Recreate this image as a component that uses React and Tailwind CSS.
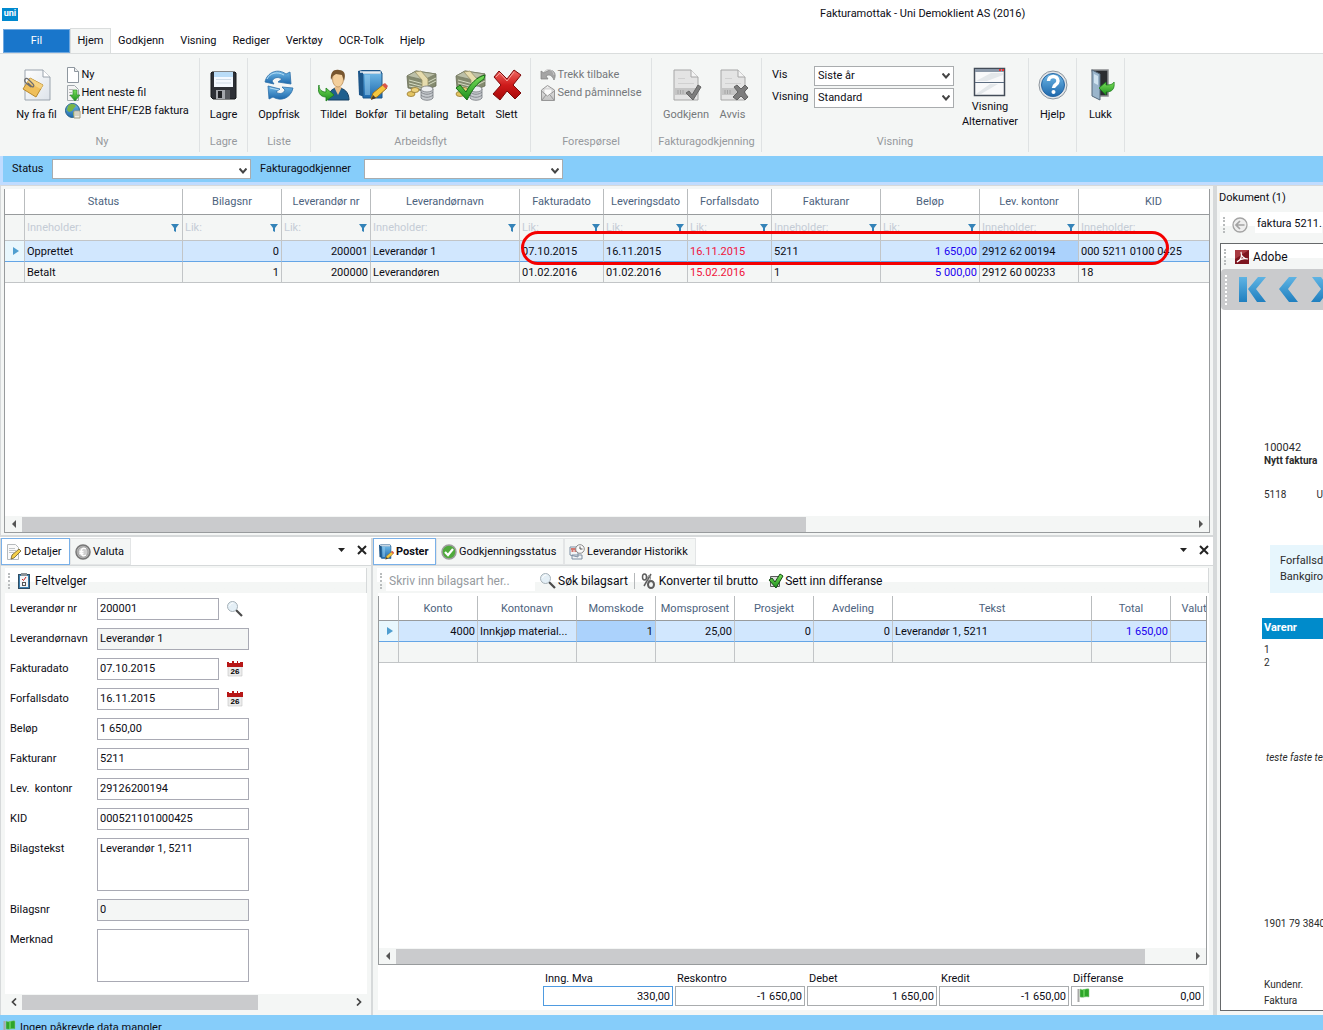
import React from "react";

// Gradients shared by the toolbar icons
const IconDefs = () => (
  <svg width="0" height="0" className="absolute" aria-hidden="true">
    <defs>
      <linearGradient id="blue" x1="0" y1="0" x2="0" y2="1">
        <stop offset="0" stopColor="#6fb8e6" />
        <stop offset="1" stopColor="#1d68ac" />
      </linearGradient>
      <linearGradient id="navArrow" x1="0" y1="0" x2="0" y2="1">
        <stop offset="0" stopColor="#5fb4e4" />
        <stop offset="1" stopColor="#1f7fbf" />
      </linearGradient>
      <linearGradient id="red" x1="0" y1="0" x2="0" y2="1">
        <stop offset="0" stopColor="#f06a64" />
        <stop offset="0.5" stopColor="#cf1b1b" />
        <stop offset="1" stopColor="#a50808" />
      </linearGradient>
      <linearGradient id="green" x1="0" y1="0" x2="0" y2="1">
        <stop offset="0" stopColor="#7be05a" />
        <stop offset="1" stopColor="#1d8f1d" />
      </linearGradient>
      <linearGradient id="paper" x1="0" y1="0" x2="1" y2="1">
        <stop offset="0" stopColor="#ffffff" />
        <stop offset="1" stopColor="#dde3ea" />
      </linearGradient>
      <linearGradient id="grey" x1="0" y1="0" x2="0" y2="1">
        <stop offset="0" stopColor="#f0f0f0" />
        <stop offset="1" stopColor="#c2c2c2" />
      </linearGradient>
    </defs>
  </svg>
);

const NoteIcon = () => (
  <svg width="32" height="34" viewBox="0 0 32 34">
    <path d="M4 2h18l7 7v23H4z" fill="url(#paper)" stroke="#9aa3ad" />
    <path d="M22 2v7h7" fill="#fff" stroke="#9aa3ad" />
    <path d="M9 10l13 7-7 12L2 21z" fill="#efbf5b" stroke="#b98a2c" />
    <path d="M9 10l13 7-2 4L6 14z" fill="#f9dc93" opacity=".7" />
    <path d="M10 19L5 15c-3-3 0-6 2-4l5 5c2 2 0 4-2 2l-3-3" fill="none" stroke="#6d6d6d" strokeWidth="1.2" />
  </svg>
);

const SaveIcon = () => (
  <svg width="32" height="34" viewBox="0 0 32 34">
    <path d="M4 4h23l1 1v25l-1 1H5l-2-2V5z" fill="#2d3036" stroke="#17181b" />
    <rect x="6" y="4" width="19" height="15" fill="#f4f9ff" />
    <path d="M6 4h19v5H6z" fill="#b9dcf7" />
    <path d="M8 11.500h15M8 15h15" stroke="#cfdbe6" />
    <rect x="8" y="22" width="14" height="9" fill="#a4a7ac" />
    <rect x="10" y="23" width="4" height="7" fill="#202226" />
    <path d="M17 22h5v9h-5z" fill="#55585d" />
  </svg>
);

const RefreshIcon = () => (
  <svg width="32" height="34" viewBox="0 0 32 34">
    <path d="M2 14C4 4 15 0 23 6l4-2 1 12-13-2 4-3c-5-3-8-1-10 2l2 3z" fill="url(#blue)" stroke="#2c6fa8" strokeWidth=".8" />
    <path d="M30 20c-2 10-12 14-20 9l-4 2-1-13 12 3-4 3c4 3 8 1 9-2l-3-3z" fill="url(#blue)" stroke="#2c6fa8" strokeWidth=".8" />
    <path d="M4 11c3-6 10-8 17-4" fill="none" stroke="#b5dcf4" />
    <path d="M7 20l9 2" fill="none" stroke="#b5dcf4" />
  </svg>
);

const UserIcon = () => (
  <svg width="32" height="34" viewBox="0 0 32 34">
    <path d="M10 32c0-8 4-12 10-12s11 4 11 12z" fill="#1f5f8e" stroke="#153f62" />
    <path d="M16 19l4 8 4-8z" fill="#e9c08d" />
    <ellipse cx="20" cy="11" rx="5.500" ry="8" fill="#f3cf9c" stroke="#b98d58" strokeWidth=".8" />
    <path d="M13 12c-1-8 3-11 8-10 6 0 7 5 5 11l-2-6-6-1-3 2z" fill="#77562f" />
    <path d="M1 17c0 5 3 7 7 7v-4l8 7-8 6v-4c-6 0-9-5-7-12z" fill="url(#green)" stroke="#1c7d1c" strokeWidth=".8" />
  </svg>
);

const BookIcon = ({ size = 32 }) => (
  <svg width={size} height={size} viewBox="0 0 32 32">
    <path d="M2 2l4-1h18l2 2v25H8l-5-2z" fill="#1d5689" />
    <path d="M7 4h19v25H7z" fill="url(#blue)" stroke="#1d5689" />
    <path d="M4 3h20v1H7" fill="none" stroke="#e5edf4" strokeWidth="1.5" />
    <path d="M9 6h5v20H9z" fill="#9bd0ef" opacity=".5" />
    <path d="M15 30l2-6 11-9 3 4-10 9z" fill="#f5c73d" stroke="#9a7220" />
    <path d="M26 16l3-2 3 3-2 3z" fill="#d9574b" />
    <path d="M15 31l2-5 3 3z" fill="#4a3b28" />
  </svg>
);

const MoneyIcon = ({ checked }) => (
  <svg width="32" height="34" viewBox="0 0 32 34">
    <path d="M1 8l9-5 20 3v12l-12 5L2 20z" fill="#858b70" stroke="#666b53" strokeWidth=".8" />
    <path d="M1 8l9-5 20 3-12 6z" fill="#bcc0a8" stroke="#7b8068" strokeWidth=".8" />
    <path d="M3 12l15 4 12-6M3 15l15 4 12-6M3 18l15 3" stroke="#d6dcc3" fill="none" />
    <path d="M9 4l6-1 7 8v10h-6V12z" fill="#e6dcae" stroke="#9b9266" strokeWidth=".8" />
    <ellipse cx="5" cy="26" rx="4" ry="2.500" fill="#e3c463" stroke="#987a2c" strokeWidth=".8" />
    <ellipse cx="9" cy="22" rx="4" ry="2.500" fill="#edd27e" stroke="#987a2c" strokeWidth=".8" />
    <path d="M15 21v9c2 3 10 3 12 0v-9" fill="#c6cace" stroke="#75797e" strokeWidth=".8" />
    <ellipse cx="21" cy="21" rx="6" ry="3" fill="#eceef0" stroke="#75797e" strokeWidth=".8" />
    <path d="M15 24c3 3 9 3 12 0M15 27c3 3 9 3 12 0" fill="none" stroke="#75797e" strokeWidth=".8" />
    {checked && (
      <path d="M1 20l4-3 6 7C15 16 22 9 30 7l-1 4C22 15 17 22 12 32z" fill="url(#green)" stroke="#186e18" />
    )}
  </svg>
);

const CrossIcon = () => (
  <svg width="32" height="34" viewBox="0 0 32 34">
    <path d="M3 9l5-6 8 8 7-9 7 5-8 10 8 8-6 6-8-8-7 9-7-6 8-9z" fill="url(#red)" stroke="#7c0909" />
    <path d="M5 9l4-4 7 8 7-9" fill="none" stroke="#f7a19c" />
  </svg>
);

const DocIcon = ({ mark }) => (
  <svg width="32" height="34" viewBox="0 0 32 34">
    <path d="M4 2h17l7 7v23H4z" fill="#e4e4e4" stroke="#a6a6a6" />
    <path d="M21 2v7h7" fill="#f4f4f4" stroke="#a6a6a6" />
    <path d="M8 10.500h7M8 15.500h16" stroke="#d0d0d0" />
    <path d="M4 20h24v7H4z" fill="#c5c5c5" />
    <path d="M8 22v4M10.500 22v4M13 22v4" stroke="#a5a5a5" />
    {mark === "check" ? (
      <path d="M16 25l3-2 3 4 6-10 3 2-8 13z" fill="#7d7d7d" stroke="#636363" />
    ) : (
      <path d="M17 19l3-2 4 4 4-4 3 3-4 4 4 5-3 3-4-4-4 4-4-3 5-5z" fill="#7d7d7d" stroke="#636363" />
    )}
  </svg>
);

const WindowIcon = () => (
  <svg width="34" height="30" viewBox="0 0 34 30">
    <rect x="1.500" y="1.500" width="30" height="27" fill="#f8f9fa" stroke="#434c58" strokeWidth="1.500" />
    <path d="M2 2h29v3H2z" fill="#8b98a8" />
    <path d="M26 3h2M29 3h2" stroke="#e33" strokeWidth="2" />
    <path d="M2 15.500h29" stroke="#5b6c80" />
    <path d="M3 14L18 6h12v2L14 14zM3 27l14-10h8L8 27z" fill="#e3e7ea" />
  </svg>
);

const HelpIcon = () => (
  <svg width="32" height="34" viewBox="0 0 32 34">
    <circle cx="16" cy="17" r="14" fill="#e2e5e8" stroke="#8d969e" />
    <circle cx="16" cy="17" r="11.500" fill="url(#blue)" stroke="#2766a3" />
    <path d="M11.500 13c0-6 9.500-6 9.500 0 0 4-4.500 3.500-4.500 7" fill="none" stroke="#fff" strokeWidth="3.500" />
    <circle cx="16.500" cy="24" r="2" fill="#fff" />
  </svg>
);

const ExitIcon = () => (
  <svg width="32" height="34" viewBox="0 0 32 34">
    <path d="M7 2h16v26h-9z" fill="#2b2d30" stroke="#8b8d90" strokeWidth="1.500" />
    <path d="M7 2l8 4v26l-8-4z" fill="#9ab5cb" stroke="#54687a" />
    <path d="M9 6l4 2v9l-4-2z" fill="#cfe2ef" />
    <path d="M14 20l7-6v3c5 0 7-1 8-3 1 7-2 10-8 10v3z" fill="url(#green)" stroke="#1c7d1c" strokeWidth=".8" />
  </svg>
);

const PageIcon = () => (
  <svg width="16" height="16" viewBox="0 0 16 16">
    <path d="M2.500.500h7l4 4v11h-11z" fill="#fff" stroke="#8e979f" />
    <path d="M9.500.500v4h4" fill="#eee" stroke="#8e979f" />
  </svg>
);

const PageDownIcon = () => (
  <svg width="16" height="16" viewBox="0 0 16 16">
    <path d="M2.500.500h7l4 4v11h-11z" fill="#f4f4f4" stroke="#a1a8ad" />
    <path d="M4 4.500h4M4 7.500h3M4 10.500h3" stroke="#b8b8b8" />
    <path d="M8 5h4v5h3l-5 6-5-6h3z" fill="url(#green)" stroke="#2e8b2e" strokeWidth=".7" />
  </svg>
);

const GlobeIcon = () => (
  <svg width="16" height="16" viewBox="0 0 16 16">
    <circle cx="7.500" cy="7.500" r="7" fill="url(#blue)" stroke="#255f85" />
    <path d="M3 3c3-3 7-2 8 0L9 5 7 8 4 9 2 7zM8 9l4 1-2 4-2-2z" fill="#79b544" />
    <path d="M9 8h6v7H9z" fill="#f1efe4" stroke="#a39d83" />
    <path d="M10 10h4M10 12h4" stroke="#a39d83" strokeWidth=".7" />
  </svg>
);

const UndoIcon = () => (
  <svg width="16" height="14" viewBox="0 0 16 14">
    <path d="M1 3v8h7L6 8c3-2 6-1 8 4 4-8-3-13-10-7z" fill="#a5a5a5" stroke="#7e7e7e" strokeWidth=".7" />
    <path d="M4 4c3-4 9-3 10 3" fill="none" stroke="#c9c9c9" />
  </svg>
);

const MailIcon = () => (
  <svg width="16" height="16" viewBox="0 0 16 16">
    <path d="M1.500 5l6-4.500 7 4.500v10.500h-13z" fill="url(#grey)" stroke="#979797" />
    <path d="M4 4h8v5l-4 3-4-3z" fill="#fafafa" stroke="#c0c0c0" strokeWidth=".7" />
    <path d="M1.500 6l6 5 7-5M2 15l4-5M14 15l-4-5" fill="none" stroke="#979797" />
  </svg>
);

const FunnelIcon = () => (
  <svg width="8" height="8" viewBox="0 0 8 8" className="shrink-0">
    <path d="M0 0h8L5 4v4L3 7V4z" fill="#3483b8" />
  </svg>
);

const PencilPageIcon = () => (
  <svg width="16" height="16" viewBox="0 0 16 16">
    <path d="M1.500.500h8l3 3v12h-11z" fill="#fafafa" stroke="#b6babd" />
    <path d="M3 4.500h6M3 6.500h7M3 8.500h5" stroke="#c1c5c8" />
    <path d="M5 15l1-4 7-6 2 2-7 7z" fill="#f3cf4b" stroke="#6b5a2b" strokeWidth=".8" />
  </svg>
);

const CoinIcon = () => (
  <svg width="16" height="16" viewBox="0 0 16 16">
    <circle cx="8" cy="8" r="7" fill="#b9b9b9" stroke="#777" strokeWidth="1.500" />
    <circle cx="8" cy="8" r="5" fill="#cfcfcf" stroke="#8b8b8b" strokeWidth=".7" />
    <path d="M11 5c-3-2-5 0-5 3s2 5 5 3M4.500 7.500h4M4.500 9.500h4" fill="none" stroke="#fff" strokeWidth="1.300" />
  </svg>
);

const ClipboardIcon = () => (
  <svg width="12" height="16" viewBox="0 0 12 16">
    <rect x=".5" y="1.500" width="11" height="14" fill="#3d7fae" stroke="#2f4c62" />
    <rect x="2" y="3" width="8" height="11" fill="#f2f5f7" />
    <rect x="3" y="0" width="6" height="3" fill="#8b9298" />
    <path d="M4 6l1.500 1.500L8 4" fill="none" stroke="#c22" />
    <rect x="4.500" y="9.500" width="3" height="3" fill="none" stroke="#555" />
  </svg>
);

const SearchIcon = () => (
  <svg width="16" height="16" viewBox="0 0 16 16">
    <path d="M9 9l6 6" stroke="#4b4b4b" strokeWidth="2.200" />
    <circle cx="5.500" cy="5.500" r="5" fill="#e4eff6" stroke="#a6b1b8" />
    <path d="M2.500 5c1-2 2-3 4-3" stroke="#fff" fill="none" />
  </svg>
);

const CalendarIcon = () => (
  <svg width="16" height="16" viewBox="0 0 16 16">
    <path d="M1 4h14v11H1z" fill="#ececec" stroke="#c4c4c4" strokeWidth=".6" />
    <path d="M0 1h2v1h3V0h2v2h3V0h1v2h2V1h3v5H0z" fill="#b71717" />
    <text x="8" y="13" textAnchor="middle" className="fill-black font-['Liberation_Sans',sans-serif] text-[8px] font-bold">
      26
    </text>
  </svg>
);

const CheckCircleIcon = () => (
  <svg width="16" height="16" viewBox="0 0 16 16">
    <circle cx="8" cy="8" r="7" fill="#4faa3b" stroke="#9c9c9c" strokeWidth="1.500" />
    <path d="M4 8l3 3 5-6" fill="none" stroke="#fff" strokeWidth="2.200" />
  </svg>
);

const HistoryIcon = () => (
  <svg width="16" height="16" viewBox="0 0 16 16">
    <path d="M1 3h8v10l-8-2zM3 11h10v4H3z" fill="#f2f4f6" stroke="#7d8fa3" />
    <path d="M2 5h6M2.500 7h2M5.500 7h2" stroke="#cc4c40" strokeWidth="1.500" />
    <circle cx="11" cy="5" r="4.300" fill="#fafafa" stroke="#8a8a8a" />
    <path d="M11 2.500V5h2.500" fill="none" stroke="#555" />
  </svg>
);

const PercentIcon = () => (
  <svg width="16" height="16" viewBox="0 0 16 16" fill="none" stroke="#5e5e5e">
    <path d="M10 1L3 13" strokeWidth="1.500" />
    <ellipse cx="3.500" cy="4" rx="2" ry="3" strokeWidth="1.500" />
    <ellipse cx="8" cy="5" rx="1.500" ry="2.500" strokeWidth="1" stroke="#8e8e8e" />
    <ellipse cx="10" cy="11.500" rx="3" ry="3.500" strokeWidth="2" />
  </svg>
);

const CheckBoxIcon = () => (
  <svg width="16" height="16" viewBox="0 0 16 16">
    <path d="M2.500 3.500h9v10h-9z" fill="#ddd" stroke="#5b5b5b" />
    <path d="M1 7l3-2 3 4 5-8 3 2-7 12z" fill="url(#green)" stroke="#154d15" />
  </svg>
);

const FlagIcon = () => (
  <svg width="13" height="15" viewBox="0 0 13 15">
    <path d="M1.500 1v13" stroke="#a9a9a9" strokeWidth="2" />
    <path d="M3 1c4 2 5-1 9 0v8c-4-1-5 1-9 0z" fill="#2ea52a" stroke="#8cc98a" strokeWidth=".5" />
    <path d="M7 1v8" stroke="#6ad45e" strokeWidth="1.500" />
  </svg>
);

const BackIcon = () => (
  <svg width="16" height="16" viewBox="0 0 16 16" fill="none" stroke="#a3a3a3">
    <circle cx="8" cy="8" r="7" fill="#eee" strokeWidth="1.300" />
    <path d="M12.500 8H4M8 4L4 8l4 4" strokeWidth="1.700" />
  </svg>
);

const AdobeIcon = () => (
  <svg width="14" height="14" viewBox="0 0 14 14">
    <rect width="14" height="14" fill="#7e1620" />
    <path d="M0 0h14L0 9z" fill="#a83b42" />
    <path d="M2 12c4-2 5-6 4-10 0 4 3 7 7 7-4-1-8 0-11 3z" fill="none" stroke="#fff" strokeWidth="1.100" />
  </svg>
);

const Chevron = () => (
  <svg width="8" height="6" viewBox="0 0 8 6" className="pointer-events-none absolute top-1/2 right-1 -translate-y-1/2">
    <path d="M.5.500L4 4.500 7.500.500" fill="none" stroke="#444" strokeWidth="2" />
  </svg>
);

const Grip = () => (
  <span className="h-4 w-[2px] shrink-0 border-l-2 border-dotted border-[#b9bcbd]"></span>
);

const menuTabs = ["Godkjenn", "Visning", "Rediger", "Verktøy", "OCR-Tolk", "Hjelp"];

const workflow = [
  { label: "Tildel", icon: <UserIcon />, width: "w-[38px]" },
  { label: "Bokfør", icon: <BookIcon />, width: "w-[38px]" },
  { label: "Til betaling", icon: <MoneyIcon />, width: "w-[62px]" },
  { label: "Betalt", icon: <MoneyIcon checked />, width: "w-[36px]" },
  { label: "Slett", icon: <CrossIcon />, width: "w-[36px]" },
];

const invoiceColumns = [
  { title: "Status", width: "w-[158px]", filter: "Inneholder:" },
  { title: "Bilagsnr", width: "w-[99px]", filter: "Lik:" },
  { title: "Leverandør nr", width: "w-[89px]", filter: "Lik:" },
  { title: "Leverandørnavn", width: "w-[149px]", filter: "Inneholder:" },
  { title: "Fakturadato", width: "w-[84px]", filter: "Lik:" },
  { title: "Leveringsdato", width: "w-[84px]", filter: "Lik:" },
  { title: "Forfallsdato", width: "w-[84px]", filter: "Lik:" },
  { title: "Fakturanr", width: "w-[109px]", filter: "Inneholder:" },
  { title: "Beløp", width: "w-[99px]", filter: "Lik:" },
  { title: "Lev. kontonr", width: "w-[99px]", filter: "Inneholder:" },
  { title: "KID", width: "w-[150px]", filter: "Inneholder:" },
];

const invoices = [
  ["Opprettet", "0", "200001", "Leverandør 1", "07.10.2015", "16.11.2015", "16.11.2015", "5211", "1 650,00", "2912 62 00194", "000 5211 0100 0425"],
  ["Betalt", "1", "200000", "Leverandøren", "01.02.2016", "01.02.2016", "15.02.2016", "1", "5 000,00", "2912 60 00233", "18"],
];

const postColumns = [
  { title: "Konto", width: "w-[79px]" },
  { title: "Kontonavn", width: "w-[99px]" },
  { title: "Momskode", width: "w-[79px]" },
  { title: "Momsprosent", width: "w-[79px]" },
  { title: "Prosjekt", width: "w-[79px]" },
  { title: "Avdeling", width: "w-[79px]" },
  { title: "Tekst", width: "w-[199px]" },
  { title: "Total", width: "w-[79px]" },
  { title: "Valut", width: "w-[47px]" },
];

const postRow = ["4000", "Innkjøp material...", "1", "25,00", "0", "0", "Leverandør 1, 5211", "1 650,00", ""];

const fields = [
  { id: "levnr", label: "Leverandør nr", value: "200001", icon: "search" },
  { id: "levnavn", label: "Leverandørnavn", value: "Leverandør 1", readOnly: true },
  { id: "fakturadato", label: "Fakturadato", value: "07.10.2015", icon: "calendar" },
  { id: "forfallsdato", label: "Forfallsdato", value: "16.11.2015", icon: "calendar" },
  { id: "belop", label: "Beløp", value: "1 650,00" },
  { id: "fakturanr", label: "Fakturanr", value: "5211" },
  { id: "kontonr", label: "Lev.  kontonr", value: "29126200194" },
  { id: "kid", label: "KID", value: "000521101000425" },
  { id: "bilagstekst", label: "Bilagstekst", value: "Leverandør 1, 5211", area: true },
  { id: "bilagsnr", label: "Bilagsnr", value: "0", readOnly: true },
  { id: "merknad", label: "Merknad", value: "", area: true },
];

const totals = [
  { id: "mva", label: "Inng. Mva", value: "330,00", active: true },
  { id: "reskontro", label: "Reskontro", value: "-1 650,00" },
  { id: "debet", label: "Debet", value: "1 650,00" },
  { id: "kredit", label: "Kredit", value: "-1 650,00" },
  { id: "differanse", label: "Differanse", value: "0,00", flag: true },
];

const RibbonGroup = ({ label, className = "", children }) => (
  <section className={`my-1 flex h-[94px] shrink-0 flex-col border-r border-[#dfe2e3] ${className}`}>
    <div className="flex h-[76px] justify-center">{children}</div>
    <div className="text-center leading-4 text-[#96999d]">{label}</div>
  </section>
);

const BigButton = ({ icon, label, className = "", disabled }) => (
  <button
    disabled={disabled}
    className={`flex shrink-0 flex-col items-center gap-1 pt-[9px] whitespace-nowrap ${disabled ? "text-[#75787b]" : ""} ${className}`}
  >
    <span className="flex h-[36px] items-center">{icon}</span>
    <span className="leading-4">{label}</span>
  </button>
);

const SmallButton = ({ icon, label, disabled }) => (
  <button
    disabled={disabled}
    className={`flex h-[18px] items-center gap-px whitespace-nowrap ${disabled ? "text-[#75787b]" : ""}`}
  >
    <span className="flex w-4 justify-center">{icon}</span>
    {label}
  </button>
);

const Dropdown = ({ id, value, className = "" }) => (
  <div className={`relative ${className}`}>
    <select
      id={id}
      defaultValue={value}
      className="block h-5 w-full appearance-none border border-[#a9acae] bg-white pl-[3px] outline-none"
    >
      <option>{value}</option>
    </select>
    <Chevron />
  </div>
);

const ScrollBar = ({ thumb, plain }) => (
  <div className="flex h-4 shrink-0 items-center bg-[#f4f6f5]">
    <button aria-label="Rull til venstre" className="flex h-4 w-[17px] shrink-0 items-center justify-center">
      <svg width="6" height="8" viewBox="0 0 6 8">
        {plain ? (
          <path d="M5 0.500L1.500 4 5 7.500" fill="none" stroke="#444" strokeWidth="1.700" />
        ) : (
          <path d="M5 0v8L1 4z" fill="#555" />
        )}
      </svg>
    </button>
    <div className="h-[15px] flex-1">
      <div className={`h-[15px] bg-[#cacbcd] ${thumb}`}></div>
    </div>
    <button aria-label="Rull til høyre" className="flex h-4 w-[17px] shrink-0 items-center justify-center">
      <svg width="6" height="8" viewBox="0 0 6 8">
        {plain ? (
          <path d="M1 0.500L4.500 4 1 7.500" fill="none" stroke="#444" strokeWidth="1.700" />
        ) : (
          <path d="M1 0v8l4-4z" fill="#555" />
        )}
      </svg>
    </button>
  </div>
);

const PanelTab = ({ icon, label, active, bold, className = "" }) => (
  <button
    className={`flex h-[27px] items-center gap-[2px] border pl-1 whitespace-nowrap ${
      active ? "border-[#79b0e8] bg-white" : "border-[#e3e5e6] bg-[#f4f6f5]"
    } ${bold ? "font-bold" : ""} ${className}`}
  >
    {icon}
    <span className="pt-[2px]">{label}</span>
  </button>
);

const PanelControls = () => (
  <div className="ml-auto flex h-6 items-center gap-3 pr-1">
    <button aria-label="Meny">
      <svg width="7" height="4" viewBox="0 0 7 4" className="block">
        <path d="M0 0h7L3.500 4z" fill="#222" />
      </svg>
    </button>
    <button aria-label="Lukk panel">
      <svg width="10" height="10" viewBox="0 0 10 10" className="block">
        <path d="M1 1l8 8M9 1L1 9" stroke="#222" strokeWidth="2" />
      </svg>
    </button>
  </div>
);

const HeadCell = ({ title }) => (
  <th className="border-r border-b border-r-[#b9bcbe] border-b-[#989b9d] bg-white pt-[2px] font-normal text-[#4c627d]">{title}</th>
);

const Marker = ({ active }) => (
  <td className={`border-r border-b ${active ? "border-r-[#c2c5c7] border-b-[#64a5e6] bg-[#e8f7fd]" : "border-[#c2c5c7] bg-[#f4f6f5]"}`}>
    {active && (
      <svg width="6" height="8" viewBox="0 0 6 8" className="ml-2">
        <path d="M0 0v8l6-4z" fill="#4f9fd0" />
      </svg>
    )}
  </td>
);

const InvoiceTable = () => (
  <table className="w-[1224px] table-fixed border-separate border-spacing-0">
    <colgroup>
      <col className="w-5" />
      {invoiceColumns.map((col) => (
        <col key={col.title} className={col.width} />
      ))}
    </colgroup>
    <thead>
      <tr className="h-[26px]">
        <HeadCell />
        {invoiceColumns.map((col) => (
          <HeadCell key={col.title} title={col.title} />
        ))}
      </tr>
    </thead>
    <tbody>
      <tr className="h-[26px]">
        <Marker />
        {invoiceColumns.map((col) => (
          <td key={col.title} className="border-r border-b border-[#c2c5c7] bg-[#f4f6f5] pr-[3px] pl-[2px]">
            <div className="flex items-center">
              <input
                aria-label={`Filter ${col.title}`}
                placeholder={col.filter}
                className="w-full min-w-0 bg-transparent pt-[2px] outline-none placeholder:text-[#c5ccd5]"
              />
              <FunnelIcon />
            </div>
          </td>
        ))}
      </tr>
      {invoices.map((row, r) => (
        <tr key={r} className="h-[21px]">
          <Marker active={r === 0} />
          {row.map((cell, c) => (
            <td
              key={c}
              className={`border-r border-b border-r-[#c2c5c7] px-[2px] pt-[2px] whitespace-nowrap ${
                r === 0 ? "border-b-[#64a5e6]" : "border-b-[#c2c5c7]"
              } ${r === 0 ? (c === 9 ? "bg-[#abd2fc]" : "bg-[#d1e7fe]") : "bg-[#f4f6f5]"} ${
                [1, 2, 8].includes(c) ? "text-right" : ""
              } ${c === 6 ? "text-[#f0143c]" : c === 8 ? "text-[#1a00f0]" : ""}`}
            >
              {cell}
            </td>
          ))}
        </tr>
      ))}
    </tbody>
  </table>
);

const PostTable = () => (
  <table className="w-[838px] table-fixed border-separate border-spacing-0">
    <colgroup>
      <col className="w-5" />
      {postColumns.map((col) => (
        <col key={col.title} className={col.width} />
      ))}
    </colgroup>
    <thead>
      <tr className="h-[25px]">
        <HeadCell />
        {postColumns.map((col) => (
          <HeadCell key={col.title} title={col.title} />
        ))}
      </tr>
    </thead>
    <tbody>
      <tr className="h-[21px]">
        <Marker active />
        {postRow.map((cell, c) => (
          <td
            key={c}
            className={`border-r border-b border-r-[#c2c5c7] border-b-[#64a5e6] px-[2px] pt-[2px] whitespace-nowrap ${
              c === 2 ? "bg-[#abd2fc]" : "bg-[#d1e7fe]"
            } ${c === 1 || c === 6 ? "" : "text-right"} ${c === 7 ? "text-[#1a00f0]" : ""}`}
          >
            {cell}
          </td>
        ))}
      </tr>
      <tr className="h-[21px]">
        <Marker />
        {postRow.map((_, c) => (
          <td key={c} className="border-r border-b border-[#c2c5c7] bg-[#f4f6f5]"></td>
        ))}
      </tr>
    </tbody>
  </table>
);

const Ribbon = () => (
  <div className="flex h-[103px] shrink-0 overflow-hidden border-t border-[#dadddd] bg-[#f4f6f5]">
    <RibbonGroup label="Ny" className="w-[200px] pl-[5px]">
      <BigButton icon={<NoteIcon />} label="Ny fra fil" className="w-[58px] pl-[2px]" />
      <div className="w-[133px] pt-2">
        <SmallButton icon={<PageIcon />} label="Ny" />
        <SmallButton icon={<PageDownIcon />} label="Hent neste fil" />
        <SmallButton icon={<GlobeIcon />} label="Hent EHF/E2B faktura" />
      </div>
    </RibbonGroup>
    <RibbonGroup label="Lagre" className="w-[48px]">
      <BigButton icon={<SaveIcon />} label="Lagre" />
    </RibbonGroup>
    <RibbonGroup label="Liste" className="w-[63px]">
      <BigButton icon={<RefreshIcon />} label="Oppfrisk" />
    </RibbonGroup>
    <RibbonGroup label="Arbeidsflyt" className="w-[220px]">
      <div className="flex pr-[2px]">
        {workflow.map((item) => (
          <BigButton key={item.label} icon={item.icon} label={item.label} className={item.width} />
        ))}
      </div>
    </RibbonGroup>
    <RibbonGroup label="Forespørsel" className="w-[121px]">
      <div className="pt-2">
        <SmallButton icon={<UndoIcon />} label="Trekk tilbake" disabled />
        <SmallButton icon={<MailIcon />} label="Send påminnelse" disabled />
      </div>
    </RibbonGroup>
    <RibbonGroup label="Fakturagodkjenning" className="w-[110px]">
      <BigButton icon={<DocIcon mark="check" />} label="Godkjenn" className="w-[52px]" disabled />
      <BigButton icon={<DocIcon mark="cross" />} label="Avvis" className="w-[41px]" disabled />
    </RibbonGroup>
    <RibbonGroup label="Visning" className="w-[267px]">
      <div className="flex flex-col gap-[2px] pt-2 pl-2">
        <div className="flex">
          <label htmlFor="vis" className="w-[42px] leading-[18px]">Vis</label>
          <Dropdown id="vis" value="Siste år" className="w-[140px]" />
        </div>
        <div className="flex">
          <label htmlFor="visning" className="w-[42px] leading-[18px]">Visning</label>
          <Dropdown id="visning" value="Standard" className="w-[140px]" />
        </div>
      </div>
      <button className="flex w-[72px] flex-col items-center pt-[9px] leading-[15px]">
        <span className="pb-[2px]">
          <WindowIcon />
        </span>
        <span>Visning</span>
        <span>Alternativer</span>
      </button>
    </RibbonGroup>
    <RibbonGroup className="w-[48px]">
      <BigButton icon={<HelpIcon />} label="Hjelp" />
    </RibbonGroup>
    <RibbonGroup className="w-[48px]">
      <BigButton icon={<ExitIcon />} label="Lukk" />
    </RibbonGroup>
  </div>
);

const DetailsPanel = () => (
  <section className="flex w-[372px] shrink-0 flex-col border-x border-[#d6d9da] bg-[#f4f6f5]">
    <div className="flex h-7 shrink-0 items-start border-b border-[#d6d9da] bg-white">
      <PanelTab icon={<PencilPageIcon />} label="Detaljer" active className="w-[69px]" />
      <PanelTab icon={<CoinIcon />} label="Valuta" className="w-[61px]" />
      <PanelControls />
    </div>
    <div className="mx-1 mt-[2px] flex h-[25px] shrink-0 items-center gap-2 border-r border-[#d6d9da] bg-gradient-to-b from-white from-55% to-[#f4f6f5] to-55% pl-[3px]">
      <Grip />
      <button className="flex items-center gap-[5px]">
        <ClipboardIcon />
        <span className="text-[12px]">Feltvelger</span>
      </button>
    </div>
    <form className="mx-1 flex flex-1 flex-col gap-2 overflow-hidden bg-white pt-[5px] pl-[5px]">
      {fields.map((f) => (
        <div key={f.id} className="flex shrink-0">
          <label htmlFor={f.id} className="w-[87px] leading-[22px] whitespace-pre">{f.label}</label>
          {f.area ? (
            <textarea
              id={f.id}
              defaultValue={f.value}
              className="block h-[53px] w-[152px] resize-none border border-[#a9aab4] bg-white px-[2px] pt-[2px] leading-4 outline-none"
            />
          ) : (
            <input
              id={f.id}
              defaultValue={f.value}
              readOnly={f.readOnly}
              className={`h-[22px] border border-[#a9aab4] px-[2px] pb-px outline-none ${f.icon ? "w-[122px]" : "w-[152px]"} ${
                f.readOnly ? "bg-[#f4f6f5]" : "bg-white"
              }`}
            />
          )}
          {f.icon && (
            <button type="button" aria-label={f.icon === "search" ? "Søk" : "Velg dato"} className="ml-2">
              {f.icon === "search" ? <SearchIcon /> : <CalendarIcon />}
            </button>
          )}
        </div>
      ))}
    </form>
    <div className="mx-1 mb-[5px]">
      <ScrollBar thumb="w-[72%]" plain />
    </div>
  </section>
);

const PostsPanel = () => (
  <section className="flex min-w-0 flex-1 flex-col border-l border-[#d6d9da] bg-[#f4f6f5]">
    <div className="flex h-7 shrink-0 items-start border-b border-[#d6d9da] bg-white">
      <PanelTab icon={<BookIcon size={16} />} label="Poster" active bold className="w-[63px]" />
      <PanelTab icon={<CheckCircleIcon />} label="Godkjenningsstatus" className="w-[128px]" />
      <PanelTab icon={<HistoryIcon />} label="Leverandør Historikk" className="w-[132px]" />
      <PanelControls />
    </div>
    <div className="mx-1 mt-[2px] flex h-[25px] shrink-0 items-center border-r border-[#d6d9da] bg-gradient-to-b from-white from-55% to-[#f4f6f5] to-55% pl-[3px] text-[12px] whitespace-nowrap">
      <Grip />
      <input
        aria-label="Bilagsart"
        placeholder="Skriv inn bilagsart her.."
        className="ml-1 h-5 w-[149px] bg-white px-[3px] outline-none placeholder:text-[#969a9e]"
      />
      <div className="ml-[5px] flex items-center gap-[6px]">
        <button className="flex items-center gap-[2px]"><SearchIcon />Søk bilagsart</button>
        <span className="h-4 w-px bg-[#b5b8ba]"></span>
        <button className="flex items-center gap-[2px]"><PercentIcon />Konverter til brutto</button>
        <button className="ml-1 flex items-center gap-px"><CheckBoxIcon />Sett inn differanse</button>
      </div>
    </div>
    <div className="mr-1 ml-[5px] flex min-h-0 flex-1 flex-col bg-white">
      <div className="mt-[3px] mr-[2px] flex min-h-0 flex-1 flex-col overflow-hidden border border-t-0 border-[#989b9d]">
        <div className="min-h-0 flex-1 overflow-hidden">
          <PostTable />
        </div>
        <ScrollBar thumb="w-[94.5%]" />
      </div>
      <div className="mr-[5px] mb-1 flex h-[41px] shrink-0 justify-end gap-[2px] pt-[6px]">
        {totals.map((t) => (
          <div key={t.id} className={t.flag ? "w-[133px]" : "w-[130px]"}>
            <label htmlFor={t.id} className="block pl-[2px] leading-[15px]">{t.label}</label>
            <div className="relative">
              <input
                id={t.id}
                defaultValue={t.value}
                className={`block h-5 w-full border bg-white px-[2px] text-right outline-none ${
                  t.active ? "border-[#4f9be0]" : "border-[#a9acae]"
                }`}
              />
              {t.flag && (
                <span className="absolute top-[2px] left-[6px]">
                  <FlagIcon />
                </span>
              )}
            </div>
          </div>
        ))}
      </div>
    </div>
    <div className="h-[5px] shrink-0"></div>
  </section>
);

const DocumentPanel = () => (
  <aside className="flex w-[110px] shrink-0 flex-col overflow-hidden border-l-4 border-[#d6d9da] bg-[#f4f6f5] whitespace-nowrap">
    <h2 className="pt-[2px] pl-[2px] leading-5">Dokument (1)</h2>
    <div className="mt-1 ml-[3px] flex h-[25px] shrink-0 items-center gap-[7px] bg-gradient-to-b from-white from-55% to-[#f4f6f5] to-55% pl-[3px]">
      <Grip />
      <button aria-label="Tilbake" className="shrink-0"><BackIcon /></button>
      <span className="bg-white pl-[2px] text-[11px]">faktura 5211.</span>
    </div>
    <div className="mt-[6px] mb-1 ml-[3px] flex flex-1 flex-col overflow-hidden border-y border-l border-[#66696b] bg-white">
      <div className="flex h-[25px] shrink-0 items-center gap-[9px] bg-gradient-to-b from-white from-55% to-[#f4f6f5] to-55% pl-[3px]">
        <Grip />
        <span className="flex items-center gap-1 text-[12px]"><AdobeIcon />Adobe</span>
      </div>
      <div className="flex h-[41px] shrink-0 items-center gap-3 rounded-l bg-[#cacbcd] pl-1">
        <span className="h-[30px] shrink-0 border-l-2 border-dotted border-white"></span>
        <button aria-label="Første side" className="shrink-0">
          <svg width="28" height="26" viewBox="0 0 28 26">
            <path d="M0 0h8v25H0zM19 0h8L17 12l10 13h-9L9 12z" fill="url(#navArrow)" />
          </svg>
        </button>
        <button aria-label="Forrige side" className="shrink-0">
          <svg width="20" height="26" viewBox="0 0 20 26">
            <path d="M10 0h8L9 12l10 13h-9L0 12z" fill="url(#navArrow)" />
          </svg>
        </button>
        <button aria-label="Neste side" className="shrink-0">
          <svg width="20" height="26" viewBox="0 0 20 26">
            <path d="M10 0H1l9 12L0 25h9l10-13z" fill="url(#navArrow)" />
          </svg>
        </button>
      </div>
      <article className="flex flex-1 flex-col overflow-hidden pl-[41px] leading-[13px] text-[#2b2b2b]">
        <p className="mt-[131px] pl-[2px]">100042</p>
        <p className="pl-[2px] text-[10px] font-bold">Nytt faktura</p>
        <p className="mt-[21px] flex justify-between pl-[2px] text-[10px]">
          <span>5118</span>
          <span>U</span>
        </p>
        <div className="mt-[44px] ml-2 h-12 shrink-0 bg-[#e7f6fd] pt-2 pl-[10px] leading-4">
          <p>Forfallsd</p>
          <p>Bankgiro</p>
        </div>
        <p className="mt-[25px] h-[21px] shrink-0 bg-[#008bcb] pl-[2px] leading-5 font-bold text-white">Varenr</p>
        <p className="mt-1 pl-[2px] text-[10px]">1</p>
        <p className="pl-[2px] text-[10px]">2</p>
        <p className="mt-[82px] pl-1 text-[10px] italic">teste faste tek</p>
        <p className="mt-[153px] pl-[2px] text-[10px]">1901 79 3840</p>
        <p className="mt-[47px] pl-[2px] text-[10px] leading-4">Kundenr.</p>
        <p className="pl-[2px] text-[10px] leading-4">Faktura</p>
      </article>
    </div>
  </aside>
);

const App = () => {
  return (
    <div className="flex h-screen flex-col overflow-hidden bg-white font-['Roboto',sans-serif] text-[11px] text-[#0c0c14]">
      <IconDefs />
      <header className="flex h-[28px] shrink-0 items-center pl-[2px]">
        <span className="flex h-[13px] w-4 items-center justify-center bg-[#0089cf] text-[9px] font-bold text-white">uni</span>
        <h1 className="ml-[802px] pt-px text-[11px] whitespace-nowrap">Fakturamottak - Uni Demoklient AS (2016)</h1>
      </header>
      <nav className="flex h-[25px] shrink-0 items-center pl-[3px]">
        <button className="mt-px h-6 w-[67px] border border-[#6fa8e0] bg-[#1976cb] pt-px text-white">Fil</button>
        <button className="h-[25px] w-[41px] border border-b-0 border-[#dadddd] bg-[#f4f6f5]">Hjem</button>
        <div className="flex gap-4 pt-[2px] pl-[7px]">
          {menuTabs.map((tab) => (
            <button key={tab}>{tab}</button>
          ))}
        </div>
      </nav>
      <Ribbon />
      <div className="flex h-[29px] shrink-0 border-b-3 border-l-3 border-[#c0dcff] bg-[#86cdfa] pt-[3px] pl-[9px]">
        <label htmlFor="status" className="w-[40px] leading-5">Status</label>
        <Dropdown id="status" value="" className="w-[199px]" />
        <label htmlFor="godkjenner" className="w-[113px] pl-[9px] leading-5">Fakturagodkjenner</label>
        <Dropdown id="godkjenner" value="" className="w-[199px]" />
      </div>
      <main className="flex min-h-0 flex-1 border-t border-[#d6d9da]">
        <div className="flex min-w-0 flex-1 flex-col">
          <section className="relative h-[351px] shrink-0 border-b-2 border-l border-[#d6d9da] bg-[#f4f6f5] pt-[3px] pr-[3px] pl-[3px]">
            <div className="flex h-[344px] flex-col overflow-hidden border border-t-0 border-[#989b9d] bg-white">
              <div className="min-h-0 flex-1 overflow-hidden">
                <InvoiceTable />
              </div>
              <ScrollBar thumb="w-[67%]" />
            </div>
            {/* marks the fields read from the invoice */}
            <div className="absolute top-[45px] left-[520px] h-[34px] w-[648px] rounded-full border-3 border-[#f40000]"></div>
          </section>
          <div className="flex min-h-0 flex-1 pt-px">
            <DetailsPanel />
            <PostsPanel />
          </div>
        </div>
        <DocumentPanel />
      </main>
      <footer className="flex h-[15px] shrink-0 items-start gap-1 bg-[#86cdfa] pt-[5px] pl-[3px] leading-4">
        <span className="shrink-0">
          <FlagIcon />
        </span>
        <span>Ingen påkrevde data mangler</span>
      </footer>
    </div>
  );
};

export default App;
